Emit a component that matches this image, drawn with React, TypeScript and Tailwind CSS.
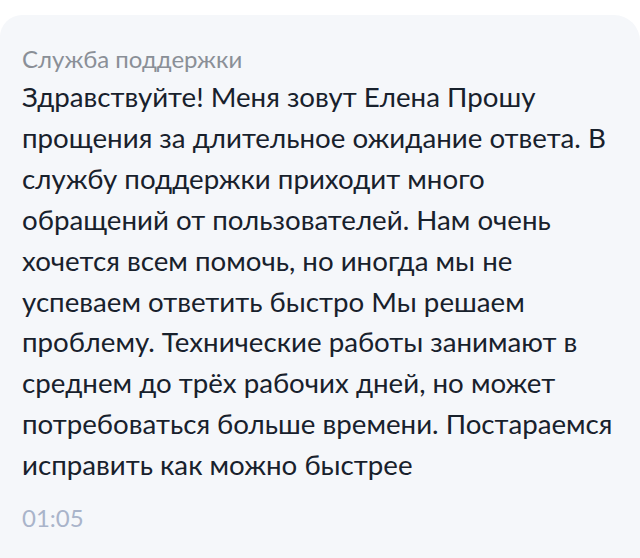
export default function App() {
  return (
    <div className="w-[640px] h-[558px] bg-white overflow-hidden" style={{ fontFamily: "Lato, 'Noto Sans', sans-serif" }}>
      <div className="mt-[15px] h-[543px] bg-[#f5f7fa] rounded-tl-[22px] rounded-tr-[26px] pl-[22px] pr-[14px] pt-[28px]">
        <div className="text-[24px] leading-[32px] text-[#8a8f97]">Служба поддержки</div>
        <div className="mt-[2px] text-[27.7px] leading-[40.9px] text-[#18212c]">
          Здравствуйте! Меня зовут Елена Прошу прощения за длительное ожидание ответа. В службу поддержки приходит много обращений от пользователей. Нам очень хочется всем помочь, но иногда мы не успеваем ответить быстро Мы решаем проблему. Технические работы занимают в среднем до трёх рабочих дней, но может потребоваться больше времени. Постараемся исправить как можно быстрее
        </div>
        <div className="mt-[16px] text-[24px] leading-[32px] text-[#a9b4ca]">01:05</div>
      </div>
    </div>
  );
}
